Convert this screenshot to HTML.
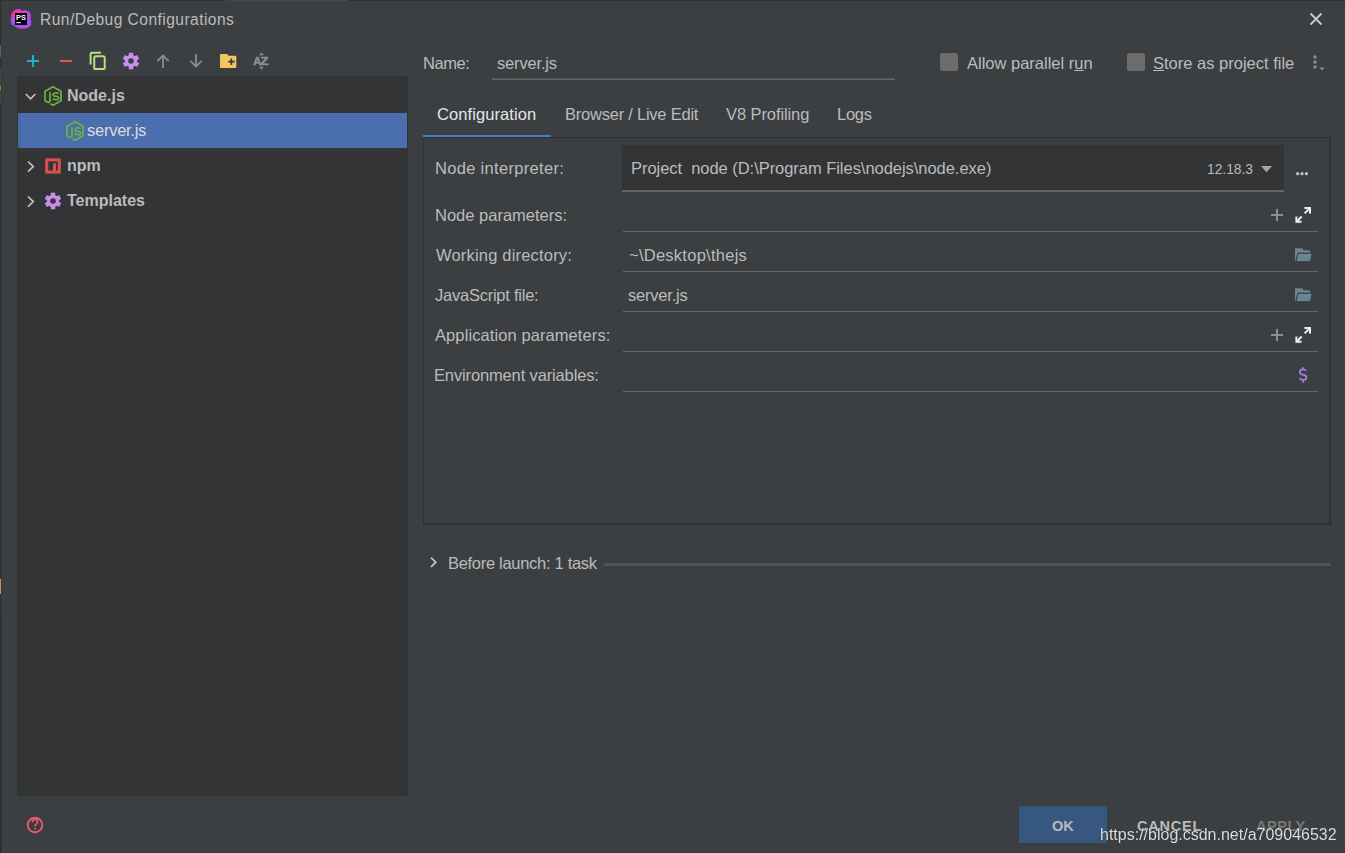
<!DOCTYPE html>
<html><head><meta charset="utf-8">
<style>
html,body{margin:0;padding:0;}
body{width:1345px;height:853px;overflow:hidden;background:#3c3f41;position:relative;font-family:"Liberation Sans",sans-serif;color:#bbbbbb;font-size:16.5px;}
.t{position:absolute;white-space:pre;line-height:20px;}
.b{font-weight:bold;font-size:16px;}
#tree{position:absolute;left:17px;top:76px;width:390px;height:720px;background:#333436;border-right:1px solid #303132;}
#sel{position:absolute;left:18px;top:113px;width:389px;height:35px;background:#4b6eaf;}
.ul{position:absolute;height:1px;background:#646464;}
#panel{position:absolute;left:423px;top:137px;width:905px;height:385px;border:1px solid #303132;border-right:2px solid #313030;border-bottom:2px solid #313030;}
#combo{position:absolute;left:622px;top:145px;width:662px;height:45px;background:#333436;border-bottom:2px solid #646464;}
.cb{position:absolute;width:18px;height:18px;background:#6c6c6c;border-radius:2px;}
#ok{position:absolute;left:1019px;top:806px;width:88px;height:37px;background:#365880;}
svg{position:absolute;left:0;top:0;}
u{text-decoration:underline;text-decoration-thickness:1px;text-underline-offset:0.5px;}
</style></head>
<body>
<div style="position:absolute;left:0;top:0;width:1px;height:853px;background:#2f3134;"></div>
<div style="position:absolute;left:1px;top:0;width:1px;height:853px;background:#36393b;"></div>
<div style="position:absolute;left:0;top:0;width:1345px;height:1px;background:#2f3134;"></div>
<div style="position:absolute;left:225px;top:0;width:124px;height:1px;background:#45484a;"></div>

<!-- tree panel -->
<div id="tree"></div>
<div id="sel"></div>
<div style="position:absolute;left:18px;top:113px;width:3px;height:35px;background:#4569a2;"></div>

<!-- panels -->
<div id="panel"></div>
<div id="combo"></div>
<div style="position:absolute;left:423px;top:135px;width:128px;height:2px;background:#4a7dbb;"></div>
<div class="ul" style="left:492px;top:78px;width:403px;height:1px;background:#505254;"></div>
<div class="ul" style="left:492px;top:79px;width:403px;height:1px;background:#666666;"></div>
<div class="ul" style="left:623px;top:231px;width:695px;"></div>
<div class="ul" style="left:623px;top:271px;width:695px;"></div>
<div class="ul" style="left:623px;top:311px;width:695px;"></div>
<div class="ul" style="left:623px;top:351px;width:695px;"></div>
<div class="ul" style="left:623px;top:391px;width:695px;"></div>
<div style="position:absolute;left:604px;top:563px;width:727px;height:3px;background:#515151;"></div>
<div class="cb" style="left:940px;top:53px;"></div>
<div class="cb" style="left:1127px;top:53px;"></div>
<div id="ok"></div>

<!-- text -->
<div class="t" style="left:40px;top:10px;font-size:15.6px;letter-spacing:0.44px;">Run/Debug Configurations</div>
<div class="t b" style="left:67px;top:86px;">Node.js</div>
<div class="t" style="left:87px;top:120px;color:#dcdcdc;letter-spacing:-0.26px;">server.js</div>
<div class="t b" style="left:67px;top:156px;">npm</div>
<div class="t b" style="left:67px;top:191px;">Templates</div>

<div class="t" style="left:423px;top:53px;letter-spacing:-0.45px;">Name:</div>
<div class="t" style="left:497px;top:53px;letter-spacing:-0.17px;">server.js</div>
<div class="t" style="left:967px;top:53px;">Allow parallel r<u>u</u>n</div>
<div class="t" style="left:1153px;top:53px;"><u>S</u>tore as project file</div>

<div class="t" style="left:437px;top:104px;color:#e6e6e6;letter-spacing:0.08px;">Configuration</div>
<div class="t" style="left:565px;top:104px;letter-spacing:-0.23px;">Browser / Live Edit</div>
<div class="t" style="left:726px;top:104px;letter-spacing:-0.09px;">V8 Profiling</div>
<div class="t" style="left:837px;top:104px;letter-spacing:-0.27px;">Logs</div>

<div class="t" style="left:435px;top:158px;letter-spacing:0.31px;">Node interpreter:</div>
<div class="t" style="left:631px;top:158px;letter-spacing:-0.04px;">Project  node (D:\Program Files\nodejs\node.exe)</div>
<div class="t" style="left:1207px;top:160px;font-size:13.8px;">12.18.3</div>
<div class="t" style="left:435px;top:205px;">Node parameters:</div>
<div class="t" style="left:436px;top:245px;letter-spacing:0.19px;">Working directory:</div>
<div class="t" style="left:629px;top:245px;letter-spacing:0.26px;">~\Desktop\thejs</div>
<div class="t" style="left:435px;top:285px;letter-spacing:-0.24px;">JavaScript file:</div>
<div class="t" style="left:628px;top:285px;letter-spacing:-0.2px;">server.js</div>
<div class="t" style="left:435px;top:325px;letter-spacing:0.09px;">Application parameters:</div>
<div class="t" style="left:434px;top:365px;letter-spacing:-0.14px;">Environment variables:</div>

<div class="t" style="left:448px;top:553px;letter-spacing:-0.3px;">Before launch: 1 task</div>

<div class="t" style="left:1052px;top:816px;font-weight:bold;font-size:14.5px;">OK</div>
<div class="t" style="left:1137px;top:816px;font-weight:bold;font-size:14.5px;letter-spacing:0.8px;">CANCEL</div>
<div class="t" style="left:1256px;top:816px;font-weight:bold;font-size:14.5px;letter-spacing:0.55px;color:#787878;">APPLY</div>
<div class="t" style="left:1100px;top:825px;font-size:16px;color:#dedede;text-shadow:0 0 1px #202020;will-change:transform;">https://blog.csdn.net/a709046532</div>

<!-- icons -->
<svg width="1345" height="853" viewBox="0 0 1345 853">
  <defs>
    <linearGradient id="psg" x1="0" y1="0" x2="1" y2="1">
      <stop offset="0" stop-color="#ff2a7e"/>
      <stop offset="0.3" stop-color="#e53bd0"/>
      <stop offset="0.6" stop-color="#b54af7"/>
      <stop offset="1" stop-color="#9a55ff"/>
    </linearGradient>
    <g id="jsi">
      <path d="M-5.6 6.1 L-8 4.65 L-8 -4.65 L0 -9.3 L8 -4.65 L8 4.65 L0 9.3 L-2.6 7.8" fill="none" stroke="#6db33f" stroke-width="1.7" stroke-linejoin="round"/>
      <path d="M-3 -3.8 V4.6 Q-3 6.4 -4.6 6.4 Q-5.6 6.4 -6.4 5.9" fill="none" stroke="#6db33f" stroke-width="1.7"/>
      <path d="M5.6 -2.2 Q4.6 -3.2 2.8 -3.2 Q0.2 -3.2 0.2 -1.3 Q0.2 0.1 2.8 0.3 Q5.7 0.5 5.7 2.2 Q5.7 3.7 2.8 3.7 Q0.6 3.7 -0.3 2.6" fill="none" stroke="#6db33f" stroke-width="1.6"/>
    </g>
    <g id="gear">
      <circle cx="0" cy="0" r="6.2"/>
      <rect x="-2.2" y="-8.3" width="4.4" height="16.6"/>
      <rect x="-2.2" y="-8.3" width="4.4" height="16.6" transform="rotate(60)"/>
      <rect x="-2.2" y="-8.3" width="4.4" height="16.6" transform="rotate(120)"/>
    </g>
    <g id="expand" fill="none" stroke="#eeeeee" stroke-width="2">
      <path d="M9 1 H14.6 V6.5"/>
      <path d="M14.1 1.5 L9.2 6.4"/>
      <path d="M1 9.4 V14.8 H6.1"/>
      <path d="M1.5 14.3 L6.3 9.5"/>
    </g>
    <g id="fold">
      <path d="M0 1 Q0 0 1 0 H7.2 L8.7 1.9 H14.3 Q15.3 1.9 15.3 2.9 V4.5 H2.5 L0.8 13.3 Q0 13.3 0 12.3 Z" fill="#6a8797"/>
      <path d="M3 5 H17.3 L15.3 13.3 H0.9 Z" fill="#6a8797" stroke="#3c3f41" stroke-width="1"/>
    </g>
  </defs>

  <!-- PS logo -->
  <path d="M12.2 13 L15.5 9.8 L19.5 9.6 L22.5 11.2 L26 10.6 L29.2 12.2 L30.6 15.8 L29.9 19 L31 22.3 L30 26 L26.5 27.9 L20 28.2 L15.8 26.8 L13.5 24.8 L11.3 20.5 L11.6 15.5 Z" fill="url(#psg)" stroke="url(#psg)" stroke-width="0.8" stroke-linejoin="round"/>
  <ellipse cx="13" cy="21.5" rx="2.6" ry="4" fill="#7a62ff" opacity="0.6"/>
  <rect x="15" y="13" width="12" height="12" fill="#000"/>
  <text x="16" y="19.6" font-family="Liberation Sans" font-weight="bold" font-size="7.6" fill="#fff">PS</text>
  <rect x="16.3" y="22" width="4.6" height="1.2" fill="#ddd"/>

  <!-- close -->
  <path d="M1310.5 13.5 L1321.5 24.5 M1321.5 13.5 L1310.5 24.5" stroke="#c5ccd2" stroke-width="1.8"/>

  <!-- toolbar -->
  <rect x="27" y="60" width="12" height="2" fill="#1fb2c6"/>
  <rect x="32" y="55" width="2" height="12" fill="#1fb2c6"/>
  <rect x="60" y="60" width="12" height="2" fill="#e05555"/>
  <path d="M90.6 64.6 V54.2 Q90.6 52.8 92 52.8 H101" fill="none" stroke="#b6df80" stroke-width="2"/>
  <rect x="94.2" y="56.2" width="10.5" height="12.8" rx="1.6" fill="none" stroke="#b6df80" stroke-width="2"/>
  <use href="#gear" transform="translate(131 61)" fill="#c98deb"/>
  <circle cx="131" cy="61" r="2.8" fill="#3c3f41"/>
  <path d="M163 55.5 V68 M157.3 61.2 L163 55.5 L168.7 61.2" fill="none" stroke="#8d8d8d" stroke-width="1.8"/>
  <path d="M196 54 V66.5 M190.3 60.8 L196 66.5 L201.7 60.8" fill="none" stroke="#8d8d8d" stroke-width="1.8"/>
  <path d="M220 55 Q220 54 221 54 H227 L228.7 55.8 H235.3 Q236.3 55.8 236.3 56.8 V67 Q236.3 68 235.3 68 H221 Q220 68 220 67 Z" fill="#f4c65f"/>
  <path d="M228.2 61.7 H234.7 M231.3 58.5 V65" stroke="#3a3c3e" stroke-width="1.8"/>
  <text x="253.2" y="65" font-family="Liberation Sans" font-weight="bold" font-size="11.2" fill="#8d8d8d" stroke="#8d8d8d" stroke-width="0.6">A</text>
  <text transform="translate(260.2 65) scale(1.22 1)" x="0" y="0" font-family="Liberation Sans" font-weight="bold" font-size="11.2" fill="#8d8d8d" stroke="#8d8d8d" stroke-width="0.6">Z</text>
  <path d="M259 55.2 H264 L261.5 52.6 Z M259 66.8 H264 L261.5 69.4 Z" fill="#8d8d8d"/>

  <!-- tree icons -->
  <path d="M25.8 94 L30.6 98.8 L35.4 94" fill="none" stroke="#c0c0c0" stroke-width="1.7"/>
  <use href="#jsi" transform="translate(53 96)"/>
  <use href="#jsi" transform="translate(75 131)"/>
  <path d="M28 161.5 L33.3 166.6 L28 171.7" fill="none" stroke="#c0c0c0" stroke-width="1.7"/>
  <rect x="46.7" y="159.9" width="12.6" height="12.2" fill="none" stroke="#dc4f4f" stroke-width="3"/>
  <rect x="53" y="163.3" width="3" height="8" fill="#dc4f4f"/>
  <path d="M28 196.5 L33.3 201.6 L28 206.7" fill="none" stroke="#c0c0c0" stroke-width="1.7"/>
  <use href="#gear" transform="translate(53 201)" fill="#c98deb"/>
  <circle cx="53" cy="201" r="2.8" fill="#333436"/>

  <!-- checkbox area kebab -->
  <circle cx="1315" cy="57" r="1.7" fill="#8d8d8d"/>
  <circle cx="1315" cy="62" r="1.7" fill="#8d8d8d"/>
  <circle cx="1315" cy="67" r="1.7" fill="#8d8d8d"/>
  <path d="M1319.4 67.6 H1324.6 L1322 70.6 Z" fill="#8d8d8d"/>

  <!-- combo -->
  <path d="M1261 166 H1272 L1266.5 172.3 Z" fill="#a4a6a8"/>
  <circle cx="1297.6" cy="173.7" r="1.6" fill="#c4c4c4"/>
  <circle cx="1302" cy="173.7" r="1.6" fill="#c4c4c4"/>
  <circle cx="1306.4" cy="173.7" r="1.6" fill="#c4c4c4"/>

  <!-- field icons -->
  <path d="M1271 215 H1283 M1277 209 V221" stroke="#8d8d8d" stroke-width="2"/>
  <use href="#expand" transform="translate(1295.4 207)"/>
  <use href="#fold" transform="translate(1295 248.3)"/>
  <use href="#fold" transform="translate(1295 288.3)"/>
  <path d="M1271 335 H1283 M1277 329 V341" stroke="#8d8d8d" stroke-width="2"/>
  <use href="#expand" transform="translate(1295.4 327)"/>
  <path d="M1306.3 370.8 Q1305.2 369.4 1303 369.4 Q1299.8 369.4 1299.8 371.9 Q1299.8 374.2 1303 374.6 Q1306.4 375 1306.4 377.4 Q1306.4 379.9 1303 379.9 Q1300.6 379.9 1299.5 378.3 M1303 367.2 V369.4 M1303 379.9 V382.8" fill="none" stroke="#a57de4" stroke-width="1.7"/>

  <!-- before launch chevron -->
  <path d="M431 557.6 L435.8 562.2 L431 566.8" fill="none" stroke="#c2c8cd" stroke-width="1.7"/>

  <!-- help -->
  <circle cx="35" cy="825" r="7.3" fill="none" stroke="#ef5a72" stroke-width="1.9"/>
  <path d="M32.4 822.2 Q32.6 819.6 35.1 819.6 Q37.6 819.6 37.6 822 Q37.6 823.6 35.8 824.5 Q35 825 35 826.6" fill="none" stroke="#ef5a72" stroke-width="1.5"/>
  <rect x="34.2" y="827.8" width="1.6" height="1.6" fill="#ef5a72"/>
</svg>

<!-- left edge colored bits -->
<div style="position:absolute;left:0;top:45px;width:1px;height:12px;background:#4a6888;"></div>
<div style="position:absolute;left:0;top:69px;width:1px;height:35px;background:#4a4536;"></div>
<div style="position:absolute;left:0;top:86px;width:1px;height:4px;background:#9a7a40;"></div>
<div style="position:absolute;left:0;top:579px;width:1px;height:15px;background:#c09a45;"></div>
<div style="position:absolute;left:0;top:612px;width:1px;height:241px;background:#252b30;"></div>
</body></html>
